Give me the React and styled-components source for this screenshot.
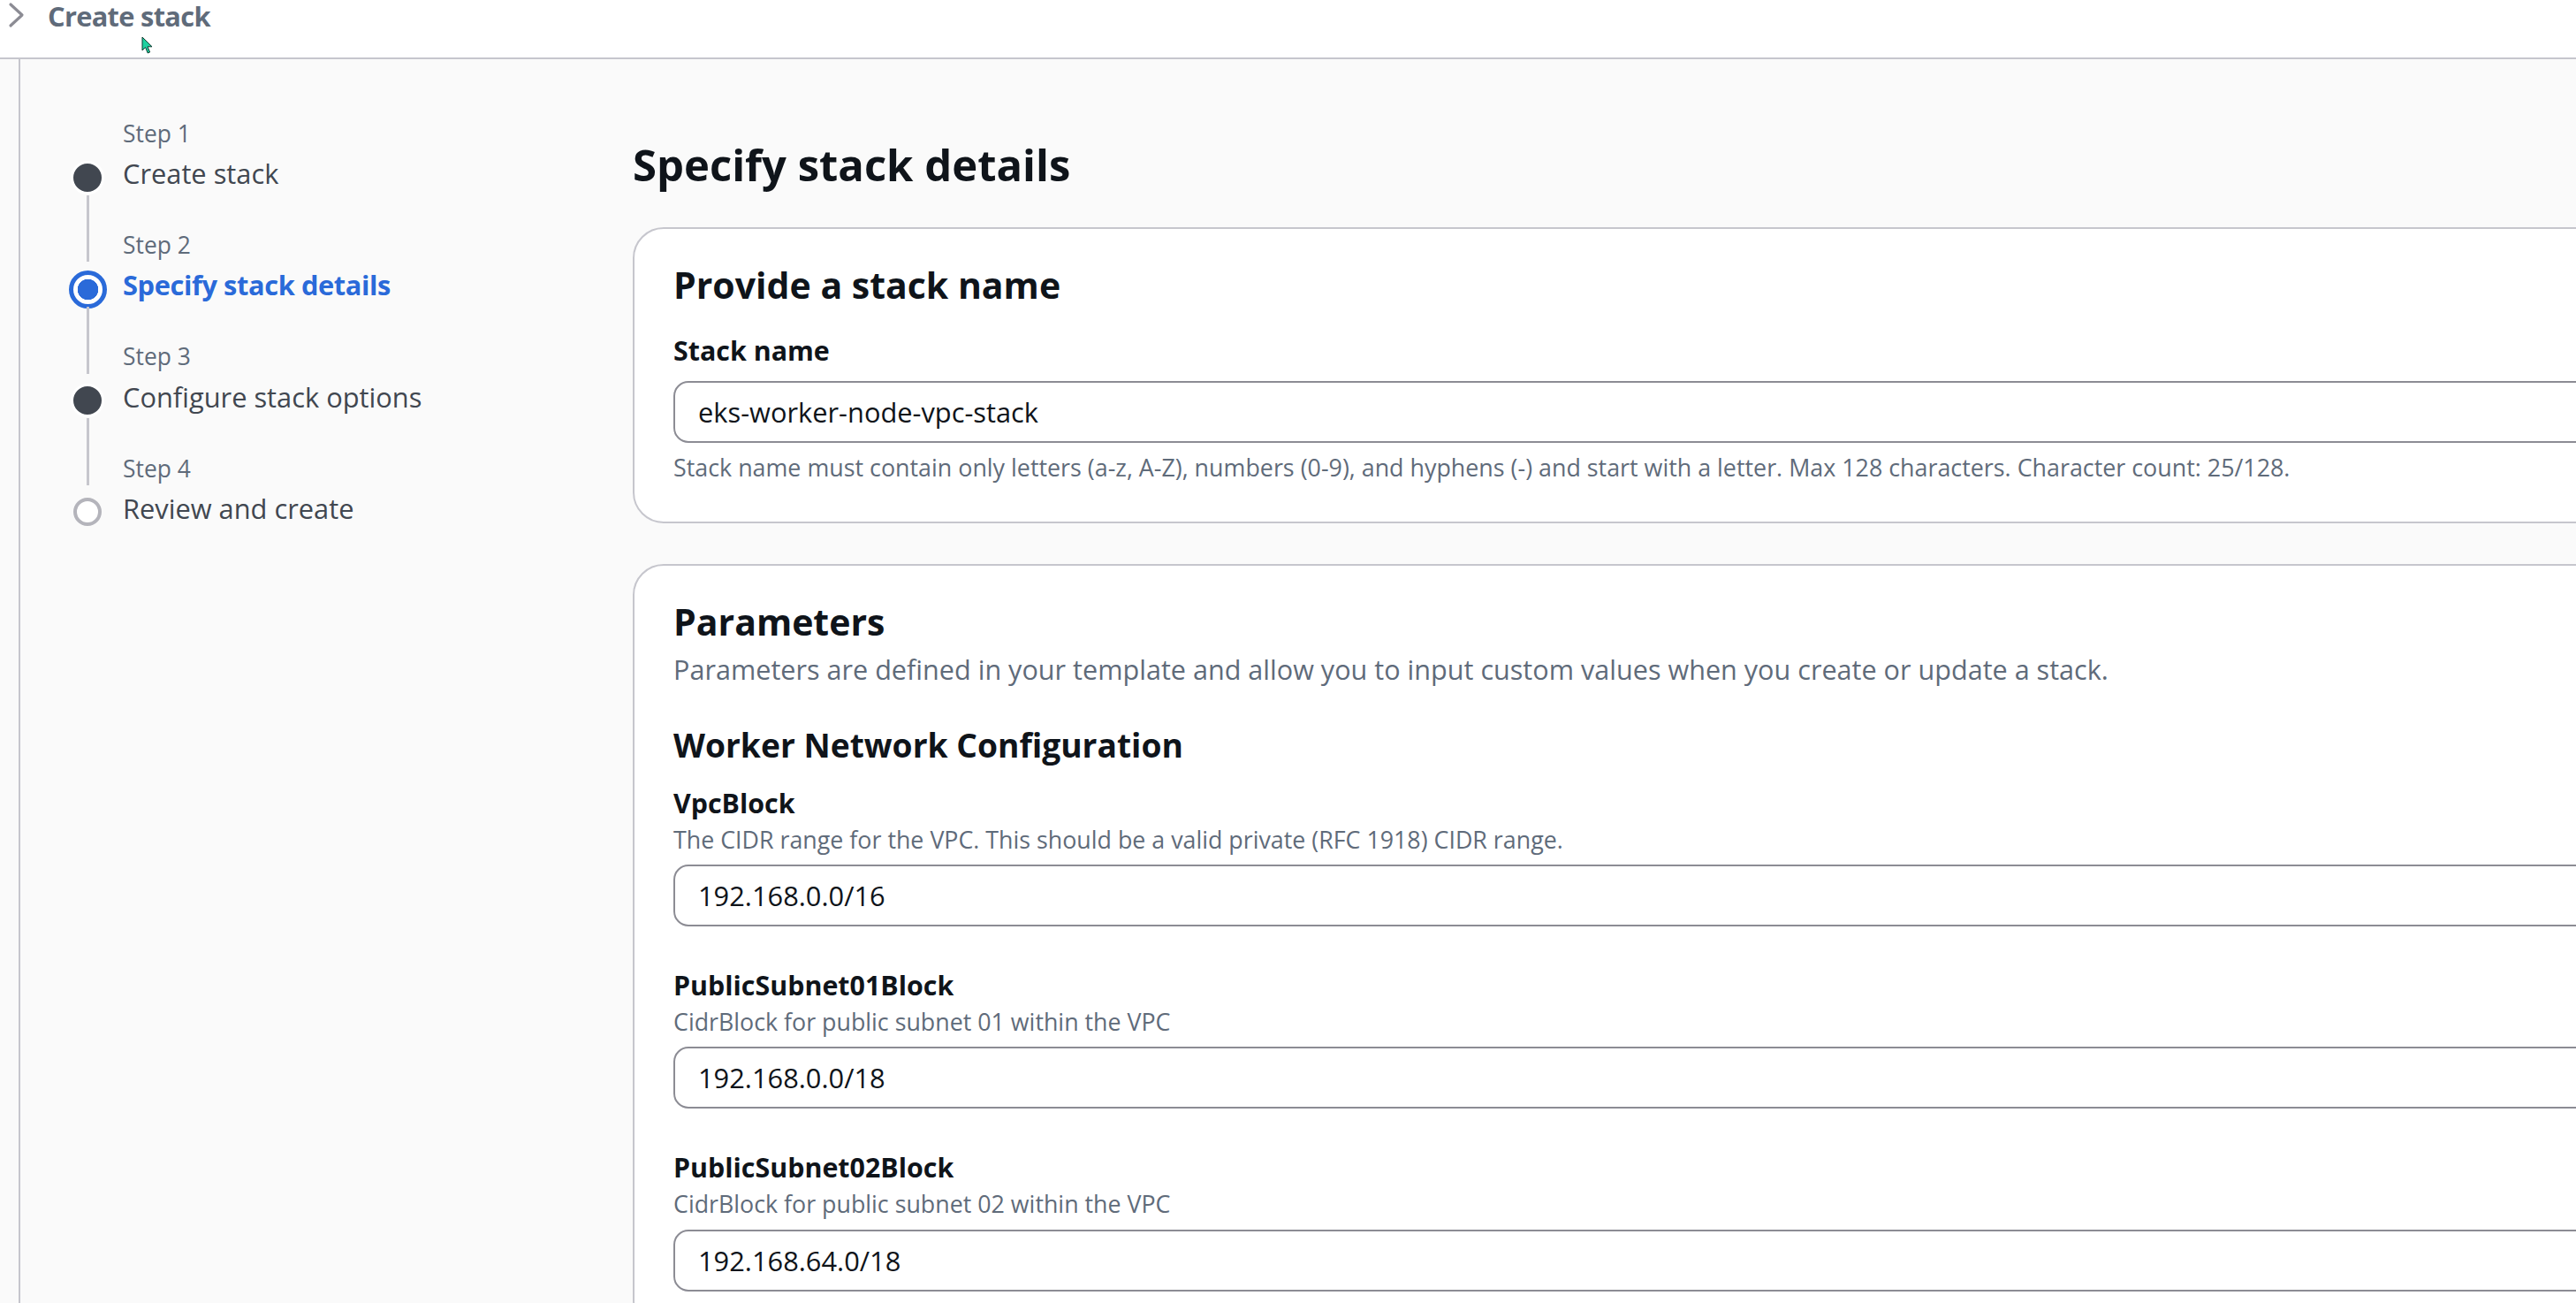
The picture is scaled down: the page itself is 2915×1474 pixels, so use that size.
import React from 'react'
import styled, { createGlobalStyle, css } from 'styled-components'

const steps = [
    { number: 'Step 1', title: 'Create stack', state: 'done' },
    { number: 'Step 2', title: 'Specify stack details', state: 'active' },
    { number: 'Step 3', title: 'Configure stack options', state: 'done' },
    { number: 'Step 4', title: 'Review and create', state: 'todo' },
]

const parameters = [
    { name: 'VpcBlock', hint: 'The CIDR range for the VPC. This should be a valid private (RFC 1918) CIDR range.', value: '192.168.0.0/16' },
    { name: 'PublicSubnet01Block', hint: 'CidrBlock for public subnet 01 within the VPC', value: '192.168.0.0/18' },
    { name: 'PublicSubnet02Block', hint: 'CidrBlock for public subnet 02 within the VPC', value: '192.168.64.0/18' },
]

export default function App() {
    return (
        <>
            <GlobalStyle />
            <TopBar>
                <svg width="20" height="30" viewBox="0 0 20 30">
                    <polyline points="3,3 16,15 3,27" fill="none" stroke="#8c8c94" strokeWidth="3.2" strokeLinecap="round" strokeLinejoin="round" />
                </svg>
                <TopTitle>Create stack</TopTitle>
            </TopBar>
            <Layout>
                <Nav>
                    {steps.map((step, index) => (
                        <Step key={step.number}>
                            <StepLabelRow>
                                {index > 0 ? <Connector /> : <span />}
                                <StepNumber $first={index === 0}>{step.number}</StepNumber>
                            </StepLabelRow>
                            <StepTitleRow>
                                <Indicator $state={step.state} />
                                <StepTitle $state={step.state}>{step.title}</StepTitle>
                            </StepTitleRow>
                        </Step>
                    ))}
                </Nav>
                <Main>
                    <PageTitle>Specify stack details</PageTitle>
                    <Container>
                        <ContainerTitle>Provide a stack name</ContainerTitle>
                        <Fields $top={29}>
                            <Field>
                                <Label>Stack name</Label>
                                <TextInput readOnly defaultValue="eks-worker-node-vpc-stack" />
                                <Constraint>
                                    Stack name must contain only letters (a-z, A-Z), numbers (0-9), and hyphens (-) and start with a letter. Max 128 characters. Character count: 25/128.
                                </Constraint>
                            </Field>
                        </Fields>
                    </Container>
                    <Container>
                        <ContainerTitle>Parameters</ContainerTitle>
                        <ContainerDesc>
                            Parameters are defined in your template and allow you to input custom values when you create or update a stack.
                        </ContainerDesc>
                        <SectionTitle>Worker Network Configuration</SectionTitle>
                        <Fields $top={22}>
                            {parameters.map((param) => (
                                <Field key={param.name}>
                                    <Label>{param.name}</Label>
                                    <Hint>{param.hint}</Hint>
                                    <TextInput readOnly defaultValue={param.value} />
                                </Field>
                            ))}
                        </Fields>
                    </Container>
                </Main>
            </Layout>
            <Cursor width="14" height="21" viewBox="0 0 14 21">
                <path d="M1 1 L1 16 L4.6 12.6 L7.2 19 L9.6 18 L7 11.8 L12 11.8 Z" fill="#1fd1a0" stroke="#0b3b2e" strokeWidth="1" strokeLinejoin="round" />
            </Cursor>
        </>
    )
}

const GlobalStyle = createGlobalStyle`
    html, body {
        margin: 0;
        padding: 0;
        height: 100%;
        overflow: hidden;
        background: #fafafa;
        font-family: "Open Sans", "Noto Sans", sans-serif;
        color: #0f141a;
    }
    * {
        box-sizing: border-box;
    }
`

const TopBar = styled.header`
    height: 67px;
    display: flex;
    align-items: flex-start;
    gap: 25px;
    padding: 2px 0 0 9px;
    background: #ffffff;
    border-bottom: 2px solid #c6c6cd;
`
const TopTitle = styled.div`
    font-size: 30.8px;
    line-height: 34px;
    margin-top: -1px;
    font-weight: 700;
    letter-spacing: -0.7px;
    color: #5f6b7a;
`

const Layout = styled.div`
    display: grid;
    grid-template-columns: 693px 2400px;
    margin-left: 21px;
    border-left: 2px solid #c6c6cd;
    min-height: calc(100vh - 67px);
`

const Nav = styled.nav`
    padding: 67px 0 0 54px;
`
const Step = styled.div`
    display: flex;
    flex-direction: column;
`
const StepLabelRow = styled.div`
    display: grid;
    grid-template-columns: 44px 1fr;
    column-gap: 18px;
`
const Connector = styled.span`
    justify-self: center;
    width: 3px;
    background: #c6c6cd;
    margin-bottom: 2px;
`
const StepNumber = styled.div`
    font-size: 26.4px;
    line-height: 35.2px;
    color: #5f6b7a;
    padding-top: ${(p) => (p.$first ? '0' : '39.6px')};
    margin-bottom: 3px;
`
const StepTitleRow = styled.div`
    display: grid;
    grid-template-columns: 44px 1fr;
    grid-template-rows: 48.4px;
    column-gap: 18px;
    align-items: start;
`

const indicatorStyles = {
    done: css`
        width: 38px;
        height: 38px;
        margin-top: 9.7px;
        background: #414750;
        border: 3px solid #ffffff;
    `,
    active: css`
        width: 43px;
        height: 43px;
        margin-top: 7.2px;
        background: radial-gradient(circle, #2a6ad9 0 11.5px, #ffffff 12px);
        border: 5px solid #2a6ad9;
    `,
    todo: css`
        width: 32px;
        height: 32px;
        margin-top: 12.7px;
        background: #ffffff;
        border: 4px solid #b4b4bb;
    `,
}
const Indicator = styled.span`
    justify-self: center;
    border-radius: 50%;
    ${(p) => indicatorStyles[p.$state]}
`
const StepTitle = styled.div`
    font-size: 30.8px;
    line-height: 48.4px;
    color: ${(p) => (p.$state === 'active' ? '#2a6ad9' : '#414750')};
    font-weight: ${(p) => (p.$state === 'active' ? 700 : 400)};
    letter-spacing: ${(p) => (p.$state === 'active' ? '-0.4px' : '0')};
`

const Main = styled.main`
    padding-top: 86px;
`
const PageTitle = styled.h1`
    margin: 0 0 38px;
    font-size: 49px;
    line-height: 66px;
    font-weight: 700;
    color: #0f141a;
`
const Container = styled.section`
    background: #ffffff;
    border: 2px solid #c6c6cd;
    border-radius: 35px;
    padding: 39px 44px 43px;
    margin-bottom: 46px;
`
const ContainerTitle = styled.h2`
    margin: 0;
    font-size: 41px;
    line-height: 48.4px;
    font-weight: 700;
`
const ContainerDesc = styled.p`
    margin: 8px 0 0;
    font-size: 30.6px;
    line-height: 44px;
    color: #5f6b7a;
`
const SectionTitle = styled.h3`
    margin: 42px 0 0;
    font-size: 37.2px;
    line-height: 44px;
    font-weight: 700;
`
const Fields = styled.div`
    display: flex;
    flex-direction: column;
    gap: 45px;
    margin-top: ${(p) => p.$top}px;
`
const Field = styled.div`
    display: flex;
    flex-direction: column;
`
const Label = styled.label`
    font-size: 30.4px;
    line-height: 44px;
    font-weight: 700;
`
const Hint = styled.div`
    margin-top: 2px;
    font-size: 26.8px;
    line-height: 33.2px;
    color: #5f6b7a;
`
const TextInput = styled.input`
    margin-top: 12px;
    width: 100%;
    height: 70px;
    padding: 0 26px;
    border: 2px solid #8c8c94;
    border-radius: 17px;
    background: #ffffff;
    font-family: "Open Sans", "Noto Sans", sans-serif;
    font-size: 30.8px;
    color: #0f141a;
    outline: none;
`
const Constraint = styled.div`
    margin-top: 10px;
    font-size: 26.85px;
    line-height: 35.2px;
    color: #5f6b7a;
`
const Cursor = styled.svg`
    position: absolute;
    left: 160px;
    top: 41px;
`
